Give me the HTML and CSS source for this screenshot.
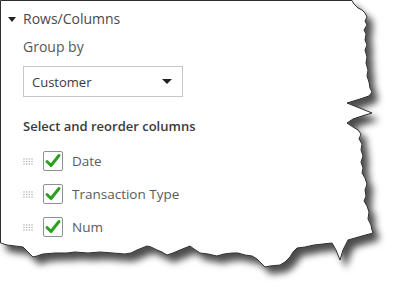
FILE: index.html
```html
<!DOCTYPE html>
<html>
<head lang="en">
    <meta charset="UTF-8">
    <title>Rows/Columns</title>
    <link rel="stylesheet" href="styles.css">
</head>
<body>
    <div class="sheet">
        <svg class="torn" width="395" height="289" viewBox="0 0 395 289">
            <defs>
                <filter id="shadow" x="-10%" y="-10%" width="130%" height="130%">
                    <feDropShadow dx="6" dy="7" stdDeviation="3.5" flood-color="#000" flood-opacity="0.7"/>
                </filter>
            </defs>
            <polygon filter="url(#shadow)" fill="#fff" stroke="#2e2e2e" stroke-width="1"
                points="0.5,0.5 352,0.5 354,4 358,8 362,10 365,13 367,17 365,21 367,25 364,30 366,34 365,40 367,45 365,50 367,57 366,63 368,70 367,76 369,82 370,88 372,92 369,96 360,99 347,103 357,107 372,113 362,116 353,119 347,123 353,127 358,130 361,134 359,139 362,144 361,150 363,156 361,162 363,168 362,173 365,178 367,184 365,190 366,196 364,201 367,206 369,212 368,219 371,225 372,230 373,233 362,236 348,240 343,250 340,260 336,250 332,243 323,244 314,245 305,247 297,248 293,252 290,257 285,262 280,265 270,266 265,267 261,263 257,259 252,256 245,255 238,253 232,253 224,254 217,256 208,254 200,253 194,249 190,246 185,248 180,250 173,253 167,255 162,252 157,250 151,247 147,246 142,248 137,250 131,253 125,254 113,253 100,252 88,253 75,252 67,253 55,253 43,254 37,256 33,257 28,252 23,247 15,246 7,245 0.5,243"/>
        </svg>
        <div class="panel">
            <div class="section-head"><span class="caret"></span>Rows/Columns</div>
            <div class="label">Group by</div>
            <div class="select">Customer<span class="arrow"></span></div>
            <div class="subhead">Select and reorder columns</div>
            <ul class="cols">
                <li>
                    <svg class="grip" width="10" height="7" viewBox="0 0 10 7"><g fill="#b3b3b3"><circle cx="1" cy="1" r="0.8"/><circle cx="3.7" cy="1" r="0.8"/><circle cx="6.3" cy="1" r="0.8"/><circle cx="9" cy="1" r="0.8"/><circle cx="1" cy="3.5" r="0.8"/><circle cx="3.7" cy="3.5" r="0.8"/><circle cx="6.3" cy="3.5" r="0.8"/><circle cx="9" cy="3.5" r="0.8"/><circle cx="1" cy="6" r="0.8"/><circle cx="3.7" cy="6" r="0.8"/><circle cx="6.3" cy="6" r="0.8"/><circle cx="9" cy="6" r="0.8"/></g></svg>
                    <span class="box"><svg width="18" height="18" viewBox="1 1 18 18"><path d="M4 10.5 L8 14.5 L16 4.5" fill="none" stroke="#2ca01c" stroke-width="3" stroke-linecap="round" stroke-linejoin="round"/></svg></span>
                    <span class="name">Date</span>
                </li>
                <li>
                    <svg class="grip" width="10" height="7" viewBox="0 0 10 7"><g fill="#b3b3b3"><circle cx="1" cy="1" r="0.8"/><circle cx="3.7" cy="1" r="0.8"/><circle cx="6.3" cy="1" r="0.8"/><circle cx="9" cy="1" r="0.8"/><circle cx="1" cy="3.5" r="0.8"/><circle cx="3.7" cy="3.5" r="0.8"/><circle cx="6.3" cy="3.5" r="0.8"/><circle cx="9" cy="3.5" r="0.8"/><circle cx="1" cy="6" r="0.8"/><circle cx="3.7" cy="6" r="0.8"/><circle cx="6.3" cy="6" r="0.8"/><circle cx="9" cy="6" r="0.8"/></g></svg>
                    <span class="box"><svg width="18" height="18" viewBox="1 1 18 18"><path d="M4 10.5 L8 14.5 L16 4.5" fill="none" stroke="#2ca01c" stroke-width="3" stroke-linecap="round" stroke-linejoin="round"/></svg></span>
                    <span class="name">Transaction Type</span>
                </li>
                <li>
                    <svg class="grip" width="10" height="7" viewBox="0 0 10 7"><g fill="#b3b3b3"><circle cx="1" cy="1" r="0.8"/><circle cx="3.7" cy="1" r="0.8"/><circle cx="6.3" cy="1" r="0.8"/><circle cx="9" cy="1" r="0.8"/><circle cx="1" cy="3.5" r="0.8"/><circle cx="3.7" cy="3.5" r="0.8"/><circle cx="6.3" cy="3.5" r="0.8"/><circle cx="9" cy="3.5" r="0.8"/><circle cx="1" cy="6" r="0.8"/><circle cx="3.7" cy="6" r="0.8"/><circle cx="6.3" cy="6" r="0.8"/><circle cx="9" cy="6" r="0.8"/></g></svg>
                    <span class="box"><svg width="18" height="18" viewBox="1 1 18 18"><path d="M4 10.5 L8 14.5 L16 4.5" fill="none" stroke="#2ca01c" stroke-width="3" stroke-linecap="round" stroke-linejoin="round"/></svg></span>
                    <span class="name">Num</span>
                </li>
            </ul>
        </div>
    </div>
</body>
</html>
```

FILE: styles.css
```css
*{
    margin: 0;
    padding: 0;
}
body{
    background: #fff;
    font-family: "Open Sans", "Liberation Sans", sans-serif;
    color: #4a4b50;
}
ul{
    list-style: none;
}
.sheet{
    width: 395px;
    height: 289px;
    position: relative;
    overflow: hidden;
}
.torn{
    position: absolute;
    left: 0;
    top: 0;
}
.panel{
    position: relative;
    padding: 10px 0 0 23px;
}
.section-head{
    display: flex;
    align-items: center;
    margin-left: -15px;
    font-size: 14px;
    line-height: 18px;
    color: #48494d;
}
.caret{
    width: 0;
    height: 0;
    border-left: 4.5px solid transparent;
    border-right: 4.5px solid transparent;
    border-top: 5px solid #222;
    margin-right: 7px;
}
.label{
    margin-top: 10px;
    font-size: 14px;
    line-height: 18px;
    color: #55565b;
}
.select{
    margin-top: 10px;
    width: 160px;
    height: 31px;
    box-sizing: border-box;
    border: 1px solid #c4c6ca;
    display: flex;
    align-items: center;
    justify-content: space-between;
    padding: 0 10px 0 8px;
    font-size: 13px;
    color: #393a3d;
}
.arrow{
    width: 0;
    height: 0;
    border-left: 5px solid transparent;
    border-right: 5px solid transparent;
    border-top: 5px solid #222;
}
.subhead{
    margin-top: 20px;
    font-size: 13px;
    line-height: 18px;
    font-weight: 600;
    color: #393a3d;
}
.cols{
    margin-top: 16px;
    display: flex;
    flex-direction: column;
    gap: 13px;
}
.cols li{
    display: flex;
    align-items: center;
    height: 20px;
}
.grip{
    margin-right: 10px;
}
.box{
    width: 20px;
    height: 20px;
    box-sizing: border-box;
    border: 1px solid #8d9096;
    border-radius: 2px;
    display: flex;
    align-items: center;
    justify-content: center;
    margin-right: 9px;
}
.name{
    font-size: 13.5px;
    color: #5a5b60;
}
```
